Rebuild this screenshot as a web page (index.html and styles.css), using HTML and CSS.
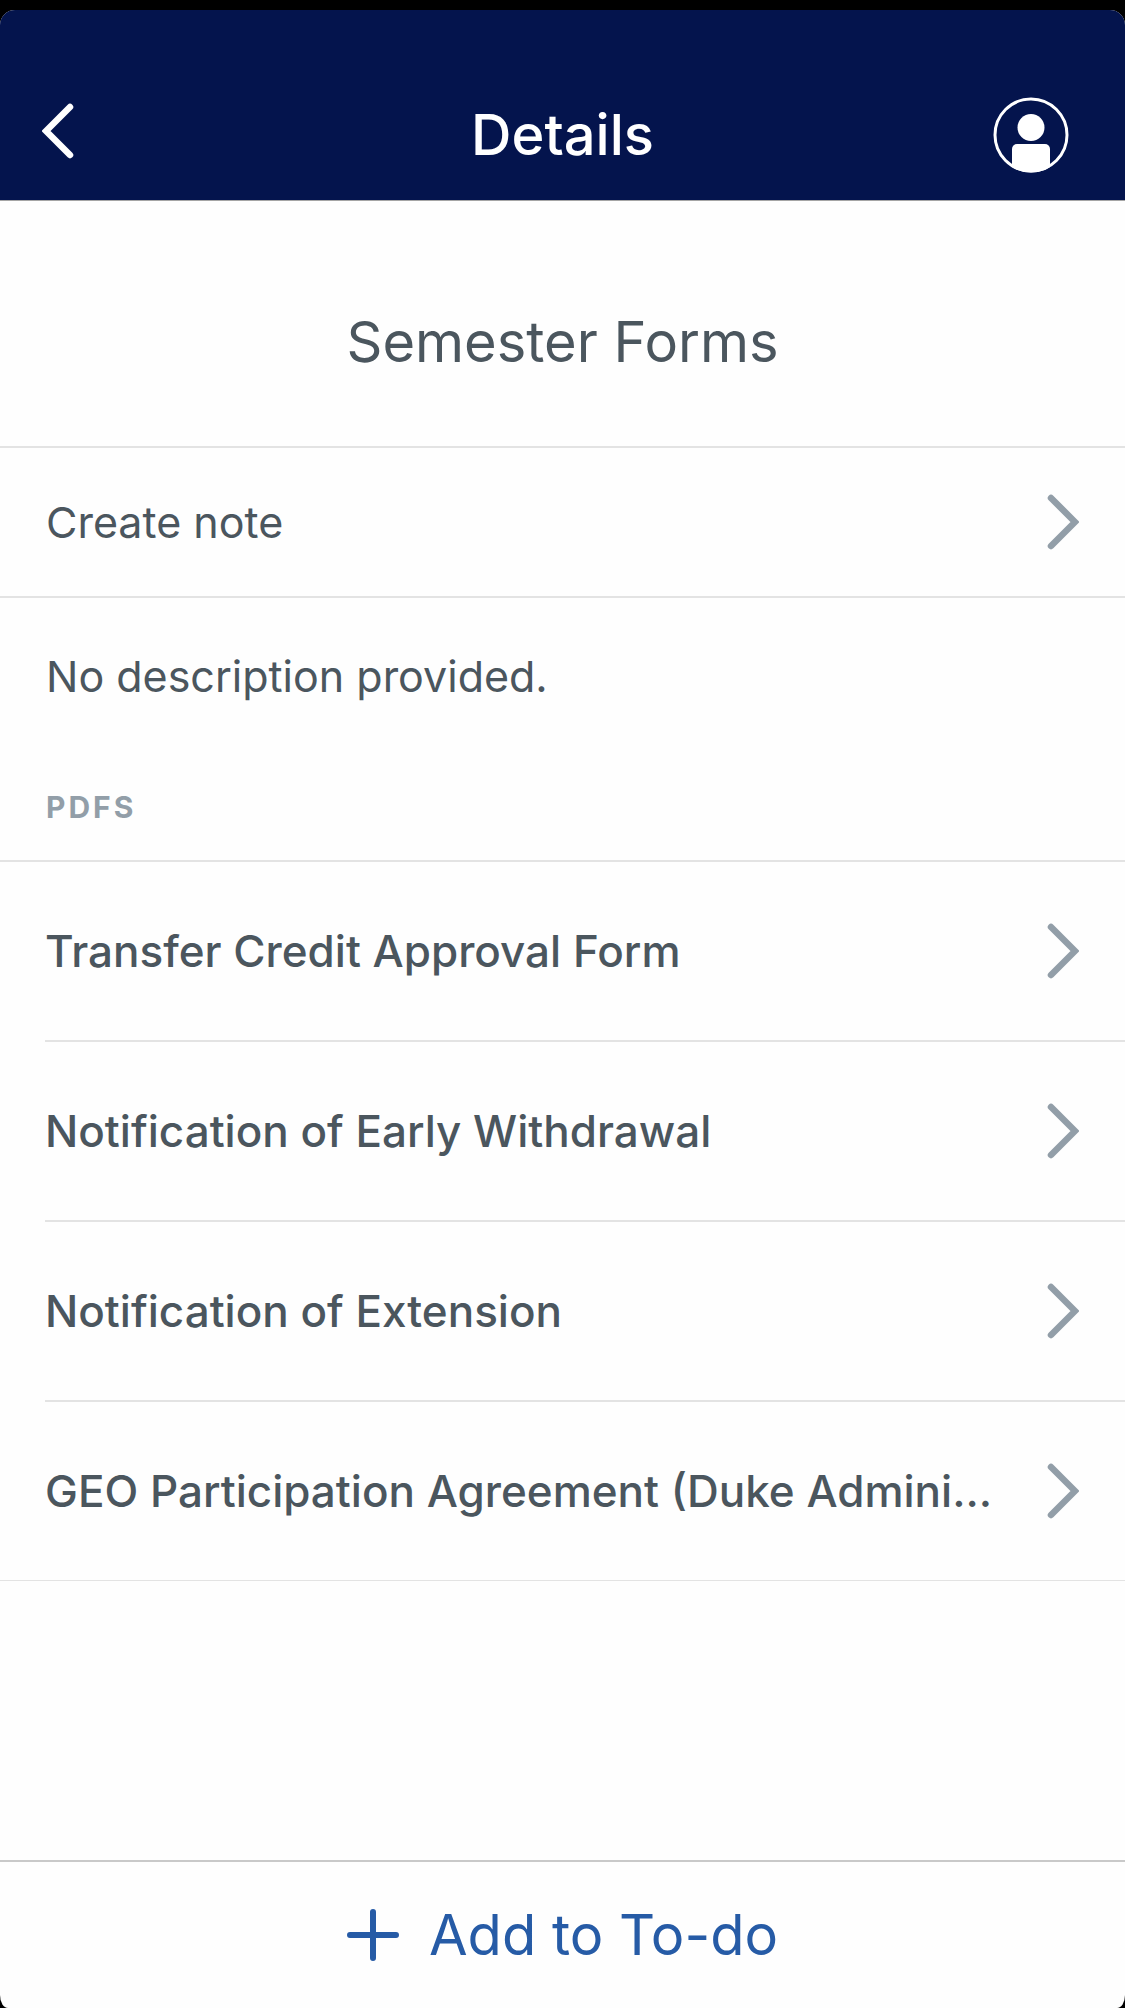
FILE: index.html
```html
<!DOCTYPE html>
<html lang="en">
<head>
<meta charset="utf-8">
<meta name="viewport" content="width=device-width, initial-scale=1">
<title>Details</title>
<link rel="stylesheet" href="styles.css">
</head>
<body>
<div class="screen">
  <header class="topbar">
    <button class="icon-button back" type="button" aria-label="Back">
      <svg class="chevron" viewBox="0 0 32 56" aria-hidden="true"><path d="M28 4 4 28l24 24"/></svg>
    </button>
    <h1 class="topbar-title">Details</h1>
    <button class="icon-button profile" type="button" aria-label="Profile">
      <svg class="avatar" viewBox="0 0 76 76" aria-hidden="true">
        <defs><clipPath id="disc"><circle cx="38" cy="38" r="37.5"/></clipPath></defs>
        <circle cx="38" cy="38" r="36" fill="none" stroke="currentColor" stroke-width="3"/>
        <circle cx="38" cy="30.500" r="13.500" fill="currentColor"/>
        <rect x="19" y="47" width="38" height="40" rx="5" fill="currentColor" clip-path="url(#disc)"/>
      </svg>
    </button>
  </header>

  <main class="content">
    <h2 class="title">Semester Forms</h2>
    <a class="row note" href="#note">
      <span class="label">Create note</span>
      <svg class="chevron" viewBox="0 0 32 56" aria-hidden="true"><path d="m4 4 24 24L4 52"/></svg>
    </a>
    <p class="description">No description provided.</p>
    <h3 class="section">PDFS</h3>
    <ul class="list">
      <li class="item"><a class="row" href="#transfer">
        <span class="label">Transfer Credit Approval Form</span>
        <svg class="chevron" viewBox="0 0 32 56" aria-hidden="true"><path d="m4 4 24 24L4 52"/></svg>
      </a></li>
      <li class="item"><a class="row" href="#withdrawal">
        <span class="label">Notification of Early Withdrawal</span>
        <svg class="chevron" viewBox="0 0 32 56" aria-hidden="true"><path d="m4 4 24 24L4 52"/></svg>
      </a></li>
      <li class="item"><a class="row" href="#extension">
        <span class="label">Notification of Extension</span>
        <svg class="chevron" viewBox="0 0 32 56" aria-hidden="true"><path d="m4 4 24 24L4 52"/></svg>
      </a></li>
      <li class="item"><a class="row" href="#agreement">
        <span class="label">GEO Participation Agreement (Duke Admini...</span>
        <svg class="chevron" viewBox="0 0 32 56" aria-hidden="true"><path d="m4 4 24 24L4 52"/></svg>
      </a></li>
    </ul>
  </main>

  <footer class="bottombar">
    <button class="add" type="button">
      <svg class="plus" viewBox="0 0 52 52" aria-hidden="true"><path d="M26 3v46M3 26h46"/></svg>
      <span>Add to To-do</span>
    </button>
  </footer>
</div>
</body>
</html>
```
FILE: styles.css
```css
* {
  box-sizing: border-box;
}

body {
  margin: 0;
  padding-top: 10px;
  background: #000;
  color: #4b565e;
  font-family: Inter, "Liberation Sans", sans-serif;
  font-size: 44px;
  line-height: 60px;
}

h1, h2, h3, p, ul {
  margin: 0;
  padding: 0;
}

button {
  padding: 0;
  border: 0;
  background: none;
  color: inherit;
  font: inherit;
  cursor: pointer;
}

.screen {
  display: flex;
  flex-direction: column;
  min-height: calc(100vh - 10px);
  overflow: hidden;
  border-radius: 15px 15px 8px 8px / 15px 15px 13px 13px;
  background: #fefefe;
}

.topbar {
  display: grid;
  grid-template-columns: 1fr auto 1fr;
  align-items: center;
  padding: 87px 42px 27px;
  border-bottom: 1px solid #a5a5a5;
  background: #04144d;
  color: #fff;
}

.topbar-title {
  font-size: 56px;
  font-weight: 500;
  line-height: 76px;
}

.icon-button {
  display: flex;
}

.back {
  justify-self: start;
  padding-bottom: 8px;
}

.profile {
  justify-self: end;
  margin-right: 14px;
}

.avatar {
  width: 76px;
  height: 76px;
}

.chevron {
  flex: none;
  width: 32px;
  height: 56px;
  fill: none;
  stroke: currentColor;
  stroke-width: 6.500;
  stroke-linecap: round;
}

.content {
  flex: 1;
}

.title {
  padding: 103px 45px 66px;
  border-bottom: 2px solid #e3e3e3;
  font-size: 56px;
  font-weight: 400;
  line-height: 76px;
  text-align: center;
}

.row {
  display: flex;
  align-items: center;
  justify-content: space-between;
  gap: 45px;
  padding: 59px 46px 59px 0;
  color: inherit;
  text-decoration: none;
}

.row .chevron {
  color: #929ea8;
}

.label {
  min-width: 0;
  overflow: hidden;
  white-space: nowrap;
}

.note {
  padding: 44px 46px;
  border-bottom: 2px solid #e3e3e3;
  font-size: 43px;
}

.description {
  padding: 48px 46px 49px;
  font-size: 43px;
}

.section {
  padding: 32px 46px 33px;
  border-bottom: 2px solid #e3e3e3;
  color: #929ea8;
  font-size: 30px;
  font-weight: 700;
  line-height: 40px;
  letter-spacing: 3px;
}

.list {
  padding-left: 45px;
  border-bottom: 1px solid #e3e3e3;
  font-weight: 500;
  list-style: none;
}

.item + .item {
  border-top: 2px solid #e3e3e3;
}

.bottombar {
  display: flex;
  justify-content: center;
  padding: 35px 45px;
  border-top: 2px solid #c9c9c9;
}

.add {
  display: flex;
  align-items: center;
  gap: 30px;
  color: #265ba6;
  font-size: 56px;
  line-height: 76px;
}

.plus {
  width: 52px;
  height: 52px;
  fill: none;
  stroke: currentColor;
  stroke-width: 6;
  stroke-linecap: round;
}
```
